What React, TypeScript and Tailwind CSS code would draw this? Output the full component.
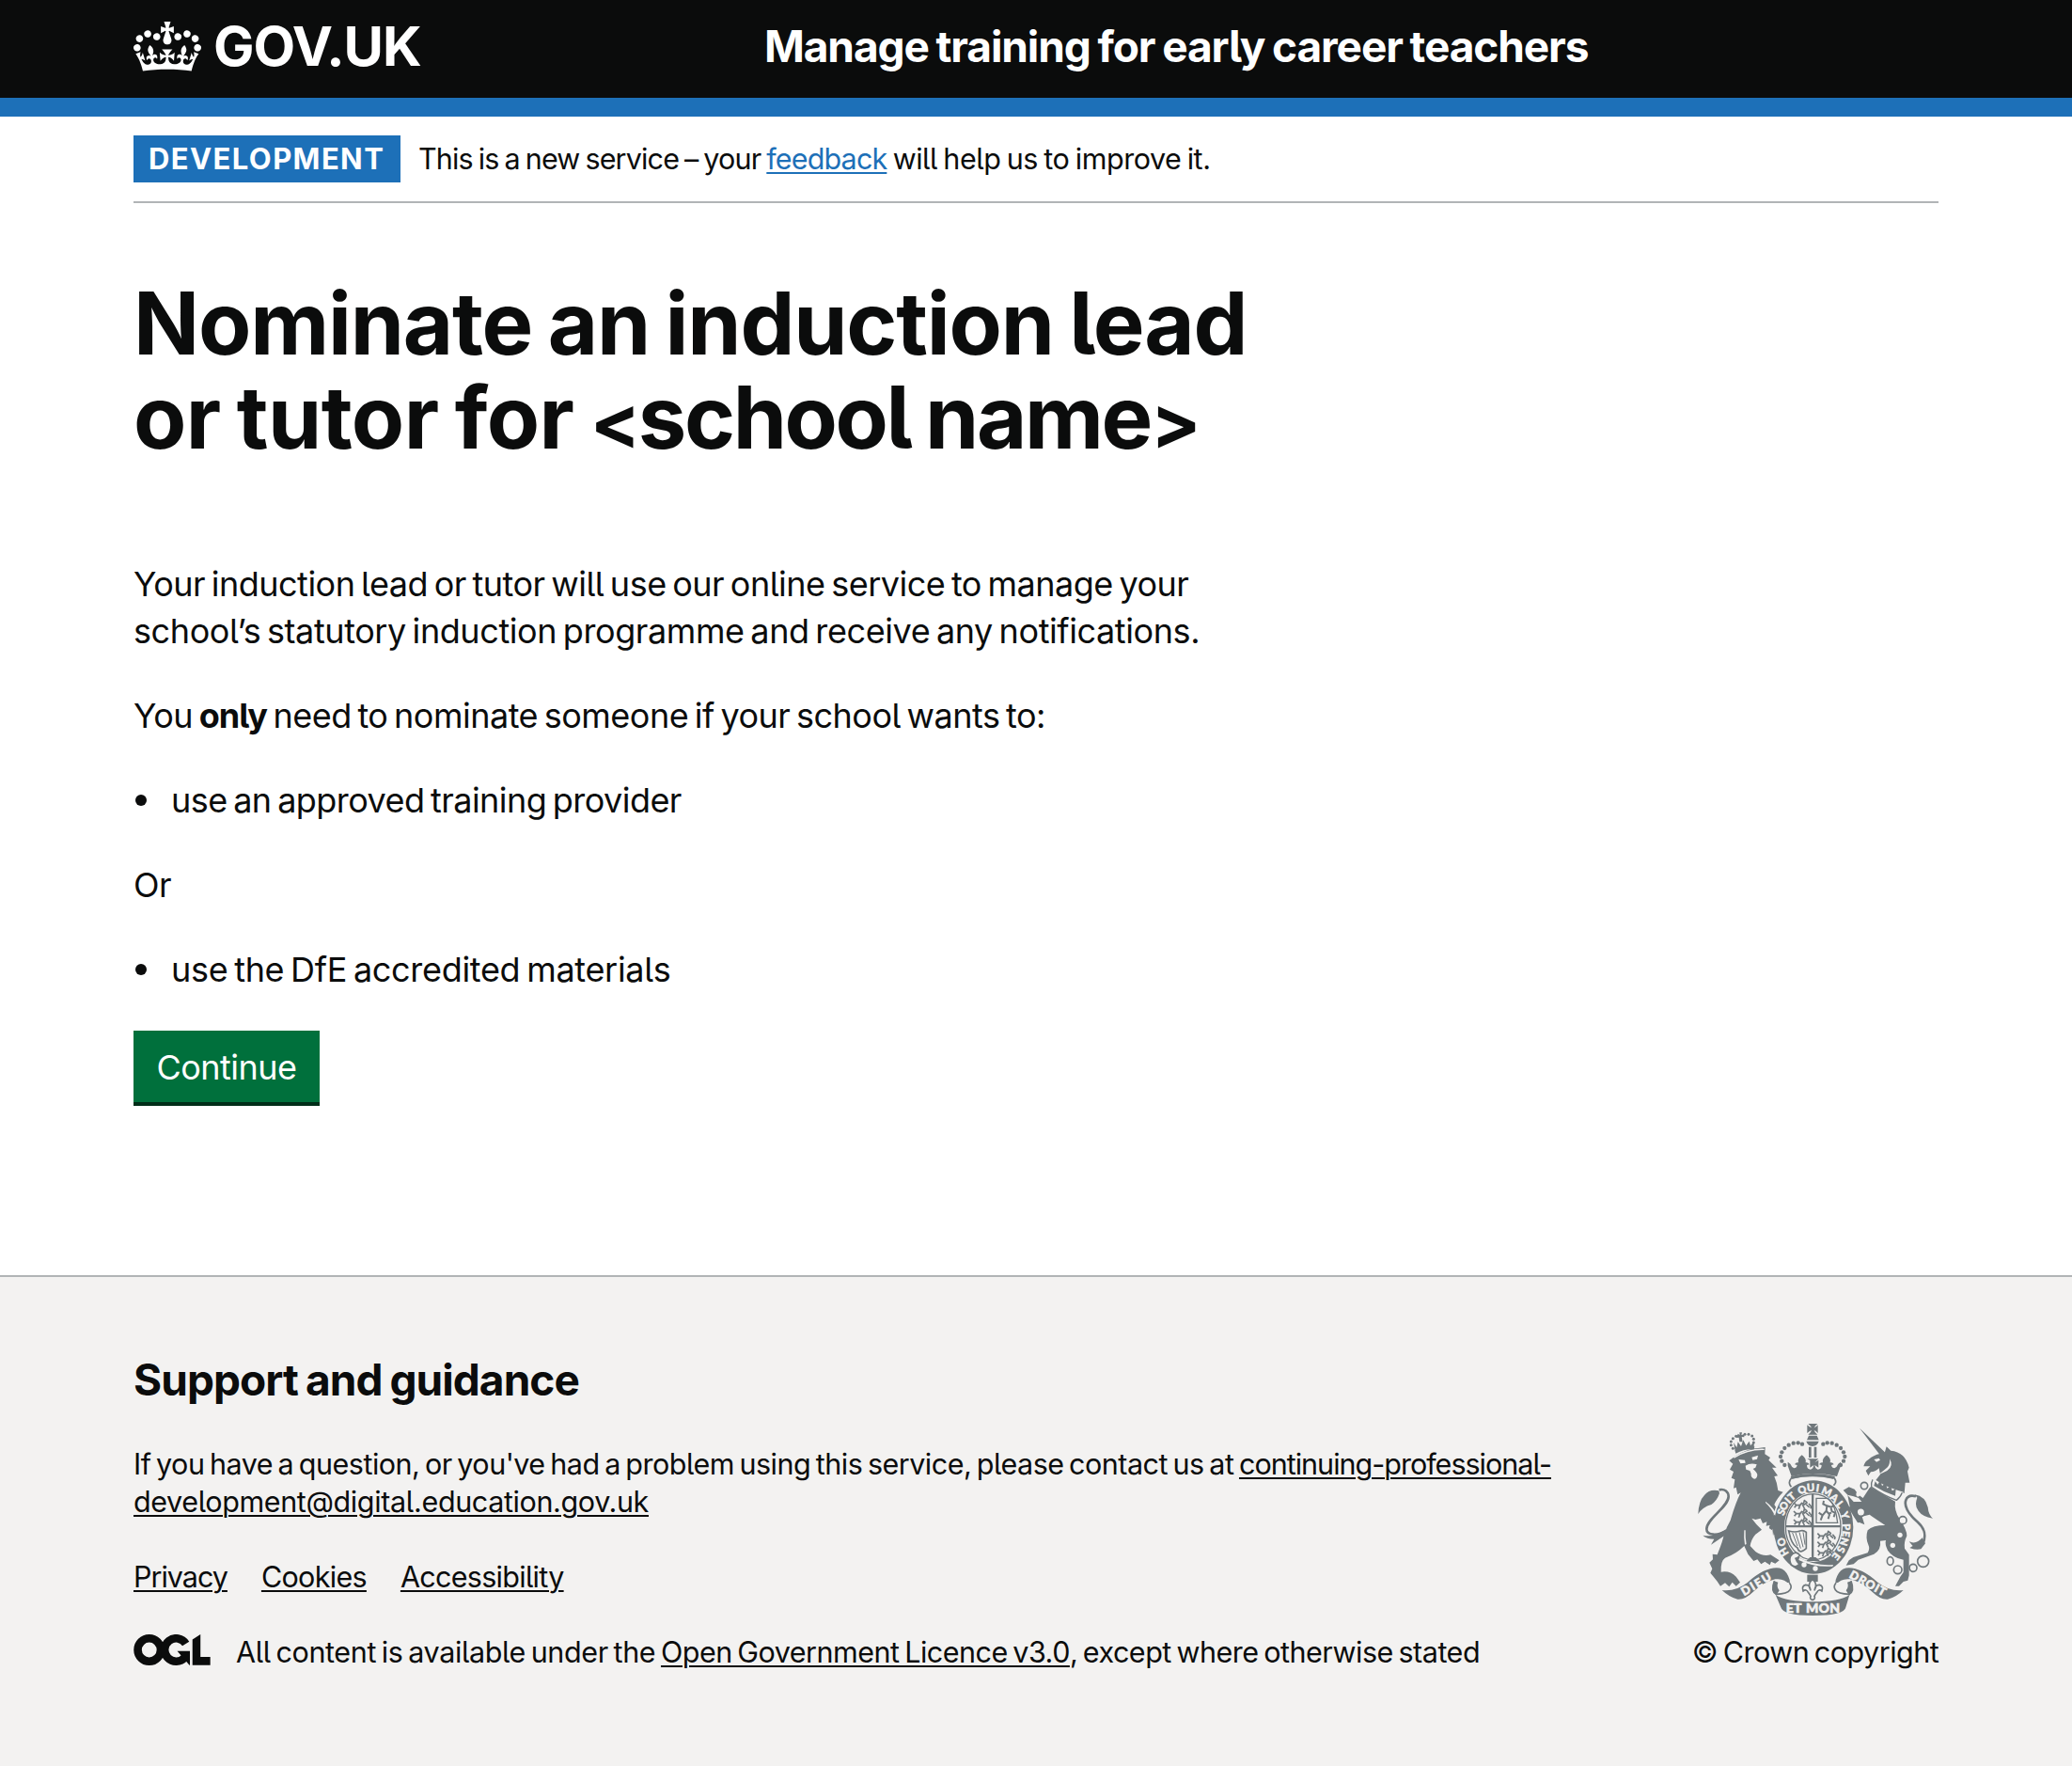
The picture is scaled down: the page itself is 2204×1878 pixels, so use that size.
import { type ReactNode } from 'react';

function CrownLogo() {
  return (
    <svg viewBox="0 0 132 97" className="h-[53px] w-[72px] fill-white" aria-hidden="true">
      <path
        fillRule="evenodd"
        d="M25 30.2c3.5 1.5 7.7-.2 9.1-3.7 1.5-3.6-.2-7.8-3.9-9.2-3.6-1.4-7.6.3-9.1 3.9-1.4 3.5.3 7.5 3.9 9zM9 39.5c3.6 1.5 7.8-.2 9.2-3.7 1.5-3.6-.2-7.8-3.9-9.1-3.6-1.5-7.6.2-9.1 3.8-1.4 3.5.3 7.5 3.8 9zM4.4 57.2c3.5 1.5 7.7-.2 9.1-3.8 1.5-3.6-.2-7.7-3.9-9.1-3.5-1.5-7.6.3-9.1 3.8-1.4 3.5.3 7.6 3.9 9.1zm38.3-21.4c3.5 1.5 7.7-.2 9.1-3.8 1.5-3.6-.2-7.7-3.9-9.1-3.6-1.5-7.6.3-9.1 3.8-1.3 3.6.4 7.7 3.9 9.1zm64.4-5.6c-3.6 1.5-7.8-.2-9.1-3.7-1.5-3.6.2-7.8 3.8-9.2 3.6-1.4 7.7.3 9.2 3.9 1.3 3.5-.4 7.5-3.9 9zm15.9 9.3c-3.6 1.5-7.7-.2-9.1-3.7-1.5-3.6.2-7.8 3.7-9.1 3.6-1.5 7.7.2 9.2 3.8 1.5 3.5-.3 7.5-3.8 9zm4.7 17.7c-3.6 1.5-7.8-.2-9.2-3.8-1.5-3.6.2-7.7 3.9-9.1 3.6-1.5 7.7.3 9.2 3.8 1.3 3.5-.4 7.6-3.9 9.1zM89.3 35.8c-3.6 1.5-7.8-.2-9.2-3.8-1.4-3.6.2-7.7 3.9-9.1 3.6-1.5 7.7.3 9.2 3.8 1.4 3.6-.3 7.7-3.9 9.1zM69.7 17.7l8.9 4.7V9.3l-8.9 2.8c-.2-.3-.5-.6-.9-.9L72.4 0H59.6l3.5 11.2c-.3.3-.6.5-.9.9l-8.8-2.8v13.1l8.8-4.7c.3.3.6.7.9.9l-5 15.4v.1c-.2.8-.4 1.6-.4 2.4 0 4.1 3.1 7.5 7 8.1h.2c.3 0 .7.1 1 .1.4 0 .7 0 1-.1h.2c4-.6 7.1-4.1 7.1-8.1 0-.8-.1-1.7-.4-2.4V34l-5.1-15.4c.4-.2.7-.6 1-.9zM66 92.8c16.9 0 32.8 1.1 47.1 3.2 4-16.9 8.9-26.7 14-33.5l-9.6-3.4c1 4.9 1.1 7.2 0 10.2-1.5-1.4-3-4.3-4.2-8.7L108.6 76c2.8-2 5-3.2 7.5-3.3-4.4 9.4-10 11.9-13.6 11.2-4.3-.8-6.3-4.6-5.6-7.9 1-4.7 5.7-5.9 8-.5 4.3-8.7-3-11.4-7.6-8.8 7.1-7.2 7.9-13.5 2.1-21.1-8 6.1-8.1 12.3-4.5 20.8-4.7-5.4-12.1-2.5-9.5 6.2 3.4-5.2 7.9-2 7.2 3.1-.6 4.3-6.4 7.8-13.5 7.2-10.3-.9-10.9-8-11.2-13.8 2.5-.5 7.1 1.8 11 7.3L80.2 60c-4.1 4.4-8 5.3-12.3 5.4 1.4-4.4 8-11.6 8-11.6H55.5s6.4 7.2 7.9 11.6c-4.2-.1-8-1-12.3-5.4l1.4 16.4c3.9-5.5 8.5-7.7 10.9-7.3-.3 5.8-.9 12.8-11.1 13.8-7.2.6-12.9-2.9-13.5-7.2-.7-5 3.8-8.3 7.1-3.1 2.7-8.7-4.6-11.6-9.4-6.2 3.7-8.5 3.6-14.7-4.6-20.8-5.8 7.6-5 13.9 2.2 21.1-4.7-2.6-11.9.1-7.7 8.8 2.3-5.5 7.1-4.2 8.1.5.7 3.3-1.3 7.1-5.7 7.9-3.5.7-9-1.8-13.5-11.2 2.5.1 4.7 1.3 7.5 3.3l-4.7-15.4c-1.2 4.4-2.7 7.2-4.3 8.7-1.1-3-.9-5.3 0-10.2l-9.5 3.4c5 6.9 9.9 16.7 14 33.5 14.8-2.1 30.8-3.2 47.7-3.2z"
      />
    </svg>
  );
}

/* Open Government Licence mark: two heavy rings, an arrow notch and a slanted upright. */
function LicenceMark() {
  return (
    <svg viewBox="0 0 484 196" className="mt-px h-[33px] w-[82px] shrink-0" aria-label="Open Government Licence">
      <g fill="none" stroke="#0b0c0c" strokeWidth="51">
        <circle cx="98" cy="98" r="72.5" />
        <path d="M329 59A72.5 72.5 0 1 0 323 145" />
      </g>
      <g fill="#0b0c0c">
        <path d="M275 106h80v88h-3l-53-61z" />
        <path d="M371 32L421.500 0v143h62v51H371z" />
      </g>
    </svg>
  );
}

type Glyph = [string, number, number, number];

const garterLetters: Glyph[] = [
  ['H', 352, 482, -122],
  ['O', 345, 450, -106],
  ['S', 344, 354, -68],
  ['O', 352, 334, -56],
  ['I', 365, 317, -48],
  ['T', 377, 304, -40],
  ['Q', 410, 282, -18],
  ['U', 438, 275, -4],
  ['I', 460, 277, 8],
  ['M', 489, 288, 24],
  ['A', 514, 308, 40],
  ['L', 532, 329, 52],
  ['Y', 547, 364, 72],
  ['P', 552, 401, 88],
  ['E', 551, 424, 96],
  ['N', 545, 448, 106],
  ['S', 535, 473, 116],
  ['E', 520, 495, 128],
];

const arch: [number, number][] = [
  [411, 137], [398, 133], [383, 134], [368, 140], [355, 150], [346, 163], [342, 177], [346, 191], [355, 204],
];
const smallArch: [number, number][] = [
  [200, 112], [190, 119], [184, 129], [184, 140], [190, 151], [228, 106], [240, 106], [251, 111], [256, 121], [256, 132], [252, 143],
];

function RibbonSide() {
  return (
    <g>
      <path d="M155 603q45 5 82-25 52-46 92-46 20 0 32 16 14 22 10 38-18-22-46-18-36 8-72 42-24 24-48 22-26-6-50-29z" />
      <path
        d="M322 574q-12 34 6 42 36-2 44-14 8-10-2-22"
        fill="#f3f2f1"
        stroke="currentColor"
        strokeWidth="5"
      />
      <path d="M322 574q-14 26 6 46l10-16q-10-12-4-26z" />
    </g>
  );
}

function QuarterLions({ x, y }: { x: number; y: number }) {
  return (
    <g transform={`translate(${x} ${y})`} fill="none" stroke="currentColor" strokeWidth="5" strokeLinejoin="round">
      {[0, 27, 54].map((dy) => (
        <path key={dy} d={`M4 ${dy + 4}l8 8-6 8m6-8h12l6-7 8 5 10-7m-24 9-4 12m12-14 6 12m6-12 10 9m-18-14 2-8 8 6m6 4 8 10-2 6`} />
      ))}
    </g>
  );
}

function RoyalArms() {
  return (
    <svg viewBox="78 72 750 612" className="h-[204px] w-[250px] fill-current text-[#6f777b]" aria-hidden="true">
      {/* lion */}
      <path d="M178 190l18-14q44-26 74-26l23-3-1 22 17 11-5 8 25 24-14 0 18 26-11 2q10 22 12 45l16 5q-20 20-28 40l13 20q10 25 13 55l-8 20-10-7-12 10-3-16-10-7 5-10-14 3 2-13-13 5-7-16-16 4-12-4q15 21 32 36l-20 15q-14 15-17 37l17 18q23 16 48 10l28 18-13 10-13-6-4 11-16-11-12 8-12-15-12 5-18-22-12-26q-26 26-61 38-15 10-13 45 28-5 48 15l13 18-13 12-12-12-10 14-13-12-15 10-10-15-12-15-10-12 6-13-9-20 11-10-1-17 15 2q20-50 20-60 10-30 22-50 18-60 33-88l-10 6-5-23-8 3 4-28-11-5 7-20-12-7 10-18z" />
      <path d="M170 412c-30 20-64 16-64-4 0-34 68-68 70-103 0-16-12-26-30-22" fill="none" stroke="currentColor" strokeWidth="8" />
      <path d="M79 360q2-42 20-60 16-20 46-14l2 8q-8 24-26 36-28 8-42 30zM94 428q28 6 48-6l28-12-8 20-42 28 10-18q-24 0-36-12z" />
      <g fill="#f3f2f1">
        <path d="M208 186l20 2 2 9-16 2zM250 179l20-6-3 12-14 3z" />
        <path d="M230 206q16-10 36-4l-4 10-8 4q14 12 14 20-2 12-10 12-12-4-10-16l-4-10-12-4z" />
        <path d="M294 320q28 20 36 46l-4 4q-12-28-32-46z" />
        <path d="M226 412q-2 24 2 46l5-2q-4-20-3-44z" />
        <path d="M192 178q46-28 98-26l0 4q-52-2-96 26z" />
      </g>
      <path d="M197 157q30-14 62-12l-2 9q-30-2-58 13z" />
      <path d="M192 132l10 16 4-18 10 14 7-20 9 18 10-14 4 14 12-14-2 24q-32-2-58 12zM206 104l6 4-1-8h8l-2 8 9-2v9l-8-1 3 16h-10l-2-14-8 1z" />
      {smallArch.map(([x, y]) => (
        <circle key={`${x}-${y}`} cx={x} cy={y} r="4.5" />
      ))}

      {/* unicorn */}
      <path d="M594 86l80 76-16 8zM607 208q4-16 16-22 16-14 36-18l16-6 5-17 14 13q46 4 58 54l-5 12 7 36-14 0-3 34-9-4-12 6-70-44 14-18-4-20q-12 12-26 12l-8 12-8-16 14-14z" />
      <path d="M628 274l80 46q-4 30 14 56 23 34 23 54-10 20-7 40l14 20v66l-4 16-14 4-14 14h-12l16-30 10-14v-40q-34-6-50-30-10-20-6-32l-18 2q4 28-20 42l-50 18-15 14-24 4 9-16 14-10 46-14q8-14 2-26-10-22-2-46 16-16 56-16-36-24-50-34l-24 6 8 26-18-8-18-20-12-32 15-13h24l-10-12-16-5-19-5-14-15 18-10 18 7 13 18 14 10z" />
      <path d="M636 248l4 2q40 26 94 40l-20 30q-44-20-84-46z" fill="#f3f2f1" />
      <path d="M636 250q-6 10-4 24 40 28 80 42 12-8 18-24" fill="none" stroke="currentColor" strokeWidth="4" />
      <path d="M640 270l4-14 8 10 8-14 6 18 12-8 4 16 12-8 4 16 12-6-2 22-36-14z" />
      <path d="M796 456c14-34 2-54-16-70-34-28-44-54-38-70 5-14 18-16 32-12" fill="none" stroke="currentColor" strokeWidth="8" />
      <path d="M770 298q34 6 42 40 2 24 16 36-34-6-46-24-14-16-4-42zM752 448q24 10 42-12l10 18-14 18q-16 4-36-4l10-6z" />
      <g fill="none" stroke="currentColor" strokeWidth="5">
        <circle cx="609" cy="270" r="11" />
        <circle cx="598" cy="354" r="13" fill="#f3f2f1" />
        <circle cx="732" cy="380" r="12" fill="#f3f2f1" />
        <ellipse cx="692" cy="510" rx="10" ry="13" />
        <circle cx="716" cy="538" r="13" />
        <circle cx="765" cy="532" r="12" />
        <circle cx="797" cy="511" r="18" />
      </g>
      <g fill="#f3f2f1">
        <ellipse cx="589" cy="297" rx="6" ry="8" />
        <circle cx="723" cy="427" r="8" />
        <circle cx="700" cy="460" r="8" />
        <path d="M640 186l16-4 4 6-12 6z" />
        <path d="M690 184q14 24-8 38l-30 14q24-18 32-26 8-10 6-26z" />
      </g>

      {/* crown */}
      <path d="M430 72h30q-10 8-11 13 6-1 12-9v26q-6-8-12-9 1 6 11 14h-30q10-8 11-14-6 1-14 9V76q8 8 14 9-1-5-11-13zM432 110h26l6 14h-38zM424 128h40q-4 14-20 16-16-2-20-16zM432 146h8v34h-8zM449 146h8v34h-8z" />
      {arch.map(([x, y]) => (
        <g key={`${x}-${y}`}>
          <circle cx={x} cy={y} r="6.5" />
          <circle cx={889 - x} cy={y} r="6.5" />
        </g>
      ))}
      <path d="M427 184h36l-12 12 12-8v24l-12-8q2 12 10 14 12 0 12-14l-8-2q4-8 12-6-4-12 12-24 16 12 11 24 8-2 12 6l-8 2q2 10 10 10 8-4 12-14l8-6 0 12-12 34q-75-18-145 0l-12-34 0-12 8 6q4 10 12 14 8 0 10-10l-8-2q4-8 12-6-5-12 11-24 16 12 12 24 8-2 12 6l-8 2q0 14 12 14 8-2 10-14l-12 8v-24l12 8z" />
      <path d="M376 246q70-18 138 0 8 12 0 20-8 8-8 12-64-26-126 0-10-10-10-18 2-10 6-14z" fill="#f3f2f1" stroke="currentColor" strokeWidth="5" />
      <path d="M374 240q70-18 142 0l-6 8q-66-14-132 0z" />

      {/* garter and shield */}
      <ellipse cx="447" cy="402" rx="132" ry="153" fill="#f3f2f1" />
      <ellipse cx="447" cy="402" rx="127" ry="149" />
      <ellipse cx="447" cy="402" rx="93" ry="111" fill="#f3f2f1" />
      <ellipse cx="446" cy="401" rx="88" ry="105" fill="none" stroke="currentColor" strokeWidth="4" />
      <path d="M441 297h7v206h-7zM358 396h176v7H358zM436 498h18l14 12h-44z" />
      <QuarterLions x={380} y={320} />
      <QuarterLions x={456} y={418} />
      <path d="M456 310h40q22 24 28 78h-68z" fill="none" stroke="currentColor" strokeWidth="4" />
      <path
        d="M470 380l6-16-12-8m12 8 12-14 10 12-4 14m-6-26 2-16-12-6 2-10m10 16 14 4 10-6m-12 6 4 14 10 4-4 14m-8-14-10 4"
        fill="none"
        stroke="currentColor"
        strokeWidth="6"
      />
      <path d="M368 414q20 6 36 0 10-4 20 4v52q-22 20-28-2-14-8-22-30z" fill="none" stroke="currentColor" strokeWidth="5" />
      <path d="M380 420l16 42m-6-42 16 50m-4-52 12 48m0-48 6 40" fill="none" stroke="currentColor" strokeWidth="3" />
      <g fill="#f3f2f1">
        <circle cx="417" cy="522" r="8" />
        <circle cx="453" cy="534" r="8" />
        <path d="M374 494q16-20 30-2-6 8-14 10 4 12 12 18-12 14-26 2-8-14-2-28z" stroke="currentColor" strokeWidth="5" />
        <path d="M402 500q50 26 108 22l-2 5q-60 4-108-20z" />
      </g>
      <path d="M320 360l26 30-2 34-12-6-12 10-4-20-10-6zM556 300l22 24-14 18zM558 340l18-14 24 60-12 2z" />
      <g fill="#f3f2f1" stroke="#f3f2f1" strokeWidth="1.4" className="[font-family:Lato,sans-serif] text-[33px] font-black">
        {garterLetters.map(([char, x, y, angle]) => (
          <text key={`${char}-${x}`} transform={`translate(${x} ${y}) rotate(${angle})`} textAnchor="middle" dy="12">
            {char}
          </text>
        ))}
      </g>

      {/* ribbon */}
      <RibbonSide />
      <g transform="translate(889 0) scale(-1 1)">
        <RibbonSide />
      </g>
      <path d="M326 618q34 22 119 22t117-22l-12 40q-4 26-105 26-96 0-102-26z" />
      <g fill="#f3f2f1" stroke="#f3f2f1" strokeWidth="1.8" className="[font-family:Lato,sans-serif] font-black [word-spacing:2px]">
        <text x="445" y="675" textAnchor="middle" className="text-[42px]" textLength="172">ET MON</text>
        <text transform="translate(263 583) rotate(-31)" textAnchor="middle" dy="14" className="text-[37px]" textLength="104">DIEU</text>
        <text transform="translate(621 580) rotate(29)" textAnchor="middle" dy="14" className="text-[37px]" textLength="126">DROIT</text>
      </g>
      <path d="M427 554h34v22h-34z" />
      <path d="M444 568q18 16 6 36 2-18 16-18 14 4 8 20-10-8-16 4-6 8-8 12 4 10-6 12-10-2-6-12-2-4-8-12-6-12-16-4-6-16 8-20 14 0 16 18-12-20 6-36z" fill="#f3f2f1" stroke="currentColor" strokeWidth="5" />
    </svg>
  );
}

function FooterLink({ children }: { children: ReactNode }) {
  return (
    <a href="#" className="underline decoration-2 underline-offset-[3px]">
      {children}
    </a>
  );
}

function Bullet({ children }: { children: ReactNode }) {
  return (
    <ul>
      <li className="flex items-center gap-[26px]">
        <span className="ml-0.5 size-3 rounded-full bg-[#0b0c0c]" />
        {children}
      </li>
    </ul>
  );
}

export default function App() {
  return (
    <div className="flex min-h-[1878px] flex-col bg-white font-[Inter,sans-serif] text-[36px] leading-[50px] tracking-[-0.5px] text-[#0b0c0c] [font-feature-settings:'cv05'] [word-spacing:-3px]">
      <header className="h-[124px] border-b-[20px] border-[#1d70b8] bg-[#0b0c0c] px-[142px] text-white">
        <div className="flex h-[104px] items-start">
          <a href="#" className="flex w-[671px] gap-[13px] pt-[23px] font-bold">
            <CrownLogo />
            <span className="-mt-[5px] self-start text-[58px] leading-[62px] tracking-[-1.1px]">GOV.UK</span>
          </a>
          <a href="#" className="pt-[25px] text-[46px] font-bold leading-[48px] tracking-[-1.1px] [word-spacing:-2px]">
            Manage training for early career teachers
          </a>
        </div>
      </header>

      <div className="mx-[142px] flex items-center gap-5 border-b-2 border-[#b1b4b6] py-5 text-[30.5px] [word-spacing:-2.5px]">
        <strong className="w-[284px] bg-[#1d70b8] pl-4 text-[31px] font-bold tracking-[1.4px] text-white">DEVELOPMENT</strong>
        <span className="-ml-px tracking-[-0.84px] [word-spacing:-1.8px]">
          This is a new service – your{' '}
          <a href="#" className="tracking-[-0.86px] text-[#1d70b8] underline decoration-2 underline-offset-[3px]">
            feedback
          </a>
          <span className="tracking-[-0.45px]"> will help us to improve it.</span>
        </span>
      </div>

      <main className="mx-[142px] flex flex-col items-start gap-10 pb-[184px] pt-[78px]">
        <h1 className="mb-[62px] text-[92px] font-bold leading-[100px] [word-spacing:-4px]">
          <span className="tracking-[-1.2px]">Nominate an induction lead</span>
          <br />
          <span className="tracking-[-0.6px]">or tutor for </span>
          <span className="tracking-[-2.4px]">
            <span className="text-[79px] leading-none">&lt;</span>school name
            <span className="text-[79px] leading-none">&gt;</span>
          </span>
        </h1>
        <p>
          Your induction lead or tutor will use our online service to manage your
          <br />
          <span className="tracking-[-0.41px]">school’s statutory induction programme and receive any notifications.</span>
        </p>
        <p className="tracking-[-0.5px]">
          You <strong className="tracking-[-1px]">only</strong> need to nominate someone if your school wants to:
        </p>
        <Bullet>
          <span className="tracking-[-0.55px]">use an approved training provider</span>
        </Bullet>
        <p>Or</p>
        <Bullet>
          <span className="tracking-[-0.31px]">use the DfE accredited materials</span>
        </Bullet>
        <button className="h-[76px] w-[198px] bg-[#00703c] pt-0.5 text-white shadow-[0_4px_0_#002d18]">Continue</button>
      </main>

      <footer className="flex flex-1 items-start justify-between border-t-2 border-[#b1b4b6] bg-[#f3f2f1] px-[142px] pt-[84px] text-[30.5px] leading-[40px] tracking-[-0.5px] [word-spacing:-2.5px]">
        <div>
          <h2 className="mb-[45px] text-[46px] font-bold leading-[50px] tracking-[-0.93px] [word-spacing:-2px]">
            Support and guidance
          </h2>
          <p className="mb-10">
            If you have a question, or you've had a problem using this service, please contact us at{' '}
            <FooterLink>
              <span className="tracking-[-1px]">continuing-professional-</span>
              <br />
              <span className="tracking-[-0.38px]">development@digital.education.gov.uk</span>
            </FooterLink>
          </p>
          <ul className="mb-10 flex gap-9">
            <li className="tracking-[-1px]">
              <FooterLink>Privacy</FooterLink>
            </li>
            <li className="tracking-[-0.7px]">
              <FooterLink>Cookies</FooterLink>
            </li>
            <li className="tracking-[-0.7px]">
              <FooterLink>Accessibility</FooterLink>
            </li>
          </ul>
          <div className="flex gap-[27px]">
            <LicenceMark />
            <span className="tracking-[-0.37px]">
              All content is available under the{' '}
              <span className="tracking-[-0.5px]">
                <FooterLink>Open Government Licence v3.0</FooterLink>
              </span>
              <span className="tracking-[-0.48px]">, except where otherwise stated</span>
            </span>
          </div>
        </div>
        <div className="mt-[72px] flex w-[262px] flex-col items-center gap-[19px]">
          <RoyalArms />
          <span className="whitespace-nowrap">© Crown copyright</span>
        </div>
      </footer>
    </div>
  );
}
